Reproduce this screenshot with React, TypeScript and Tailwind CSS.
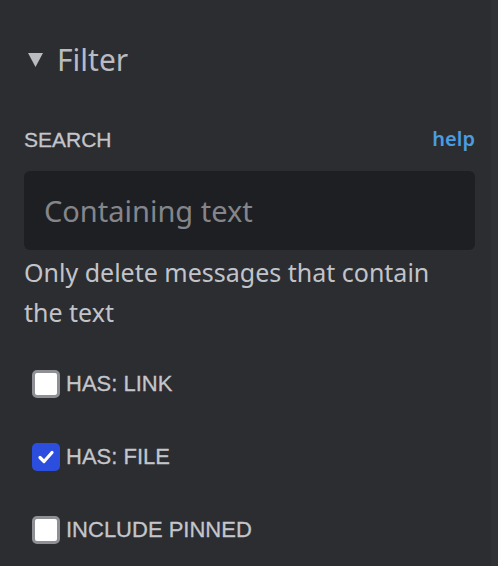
// Панель фильтра: поиск по тексту + чекбоксы
import React, { useState } from 'react';

function Check({ label, checked, onChange }: { label: string; checked: boolean; onChange: () => void }) {
  return (
    <label className="flex items-center h-[28px] cursor-pointer select-none" onClick={onChange}>
      <span
        className={
          checked
            ? 'ml-[8px] w-[28px] h-[28px] rounded-[5px] bg-[#2b4ede] flex items-center justify-center'
            : 'ml-[8px] w-[28px] h-[28px] rounded-[5px] bg-white border-[3px] border-[#8e9095]'
        }
      >
        {checked && (
          <svg width="20" height="20" viewBox="0 0 20 20" fill="none">
            <path d="M4 10.5l4 4 8-9" stroke="white" strokeWidth="3.2" strokeLinecap="round" strokeLinejoin="round" />
          </svg>
        )}
      </span>
      <span className="ml-[6px] text-[22px] text-[#c4c6cb] font-['Liberation_Sans',Arial,sans-serif] leading-none [-webkit-text-stroke:0.3px_#c4c6cb]">
        {label}
      </span>
    </label>
  );
}

export default function App() {
  const [text, setText] = useState('');
  const [link, setLink] = useState(false);
  const [file, setFile] = useState(true);
  const [pinned, setPinned] = useState(false);

  return (
    <div className="w-[498px] h-[566px] flex bg-[#2b2d31] overflow-hidden font-['Noto_Sans',sans-serif]">
      <div className="flex-1 pl-[24px] pr-[16px] pt-[40px]">
        {/* Заголовок секции */}
        <div className="flex items-center h-[40px] text-[#b9bbc0]">
          <svg width="15" height="14" viewBox="0 0 15 14" className="ml-[4px] shrink-0">
            <path d="M0 0h15L7.5 14z" fill="#b9bbc0" />
          </svg>
          <span className="ml-[14px] text-[30px] leading-none">Filter</span>
        </div>

        <div className="mt-[47px] flex items-center justify-between h-[24px]">
          <span className="text-[21px] text-[#c4c6cb] font-['Liberation_Sans',Arial,sans-serif] leading-none [-webkit-text-stroke:0.3px_#c4c6cb]">SEARCH</span>
          <a href="#" className="text-[20px] font-semibold text-[#4b9ce0] leading-none">help</a>
        </div>

        <input
          type="text"
          value={text}
          onChange={e => setText(e.target.value)}
          placeholder="Containing text"
          className="mt-[20px] w-full h-[79px] rounded-[6px] bg-[#1e1f22] px-[20px] text-[29px] text-[#dbdee1] placeholder:text-[#84868b] outline-none"
        />

        <p className="mt-[2px] max-w-[420px] text-[25px] leading-[40px] text-[#c2c4c9]">
          Only delete messages that contain the text
        </p>

        <div className="mt-[38px] flex flex-col gap-[45px]">
          <Check label="HAS: LINK" checked={link} onChange={() => setLink(!link)} />
          <Check label="HAS: FILE" checked={file} onChange={() => setFile(!file)} />
          <Check label="INCLUDE PINNED" checked={pinned} onChange={() => setPinned(!pinned)} />
        </div>
      </div>
      <div className="w-[7px] bg-[#303236]" />
    </div>
  );
}
